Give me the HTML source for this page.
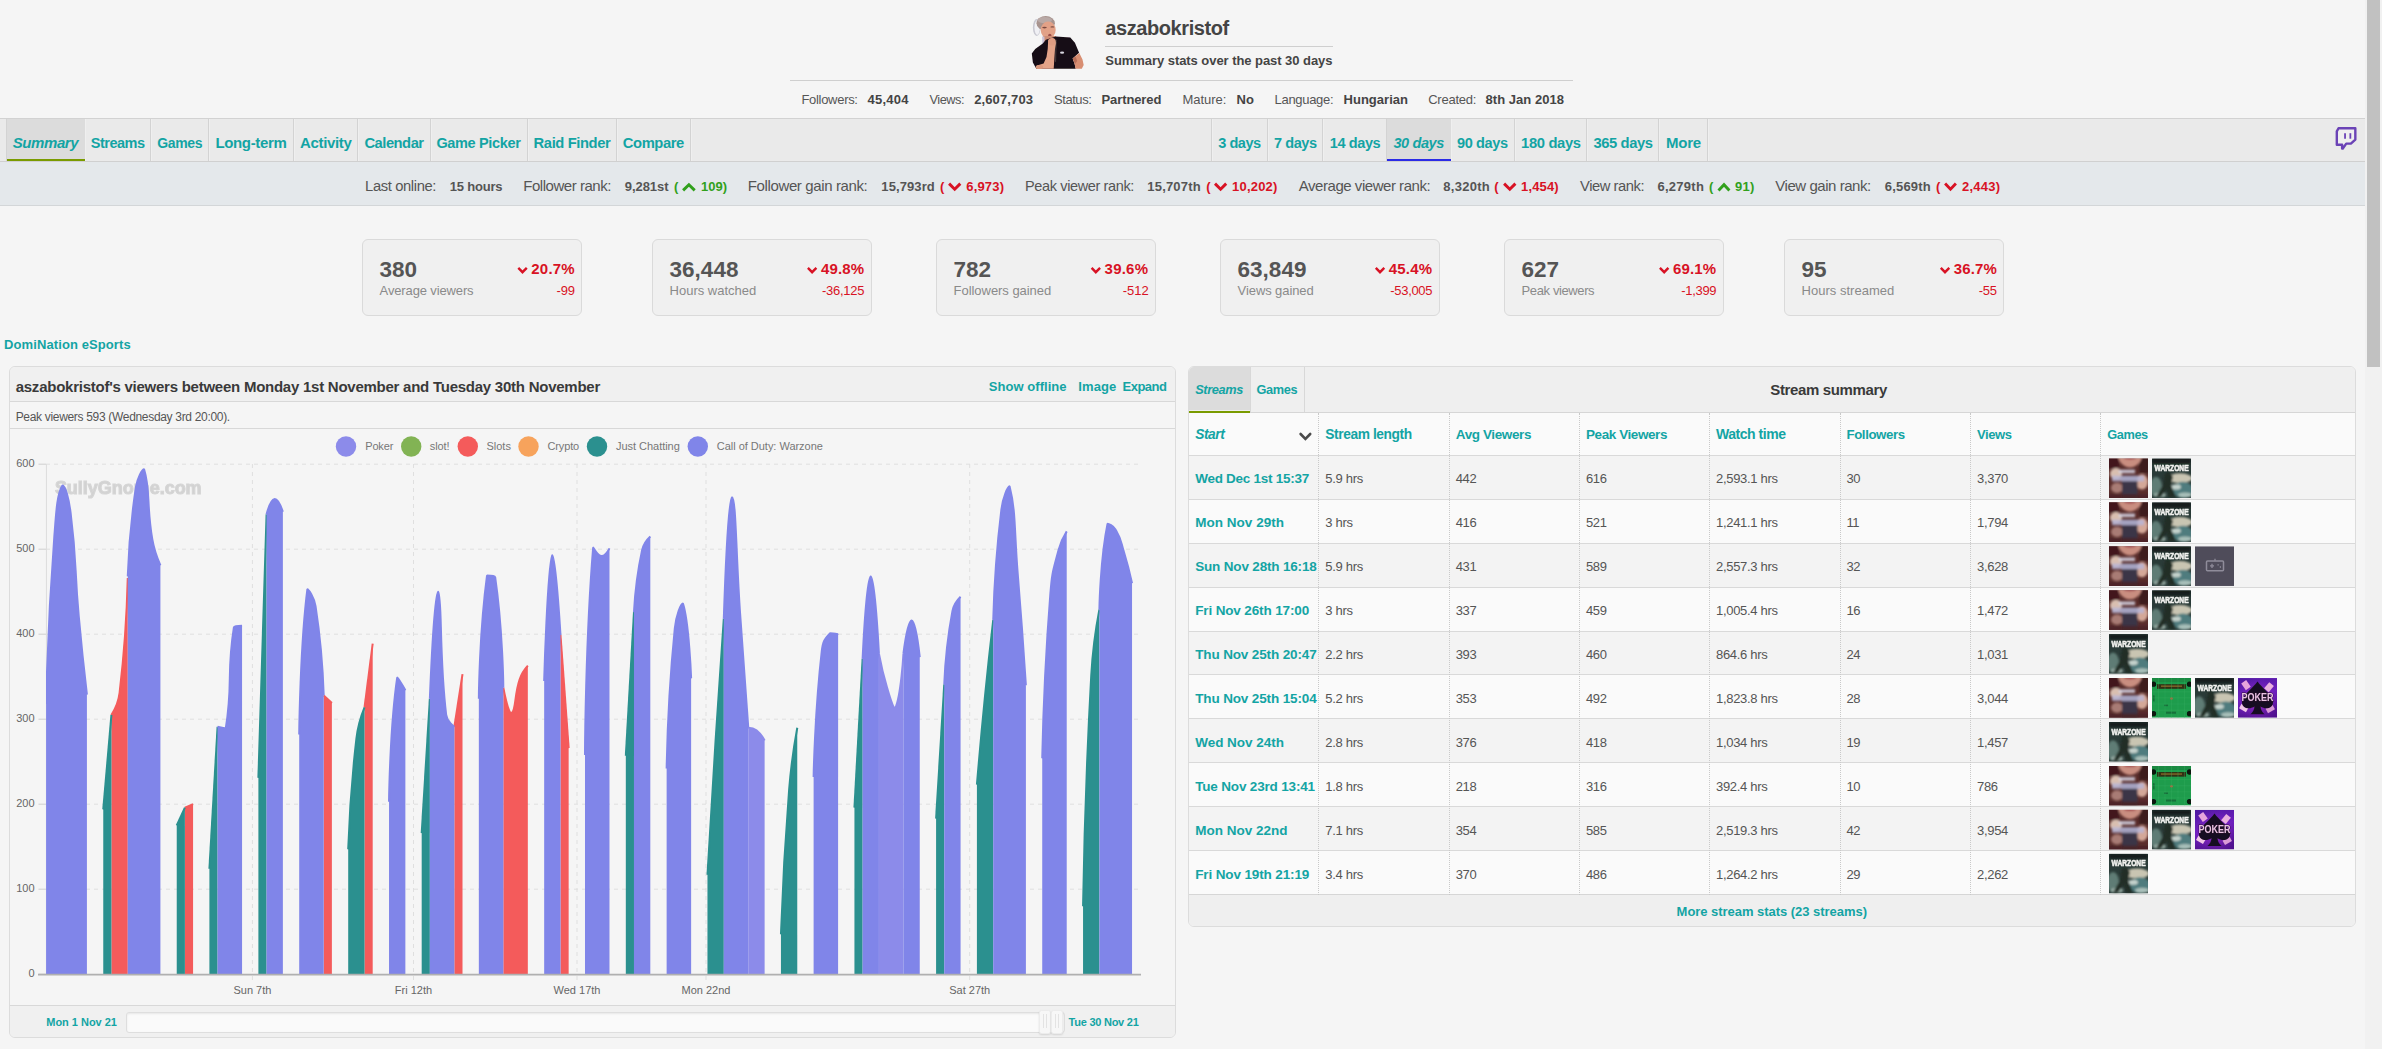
<!DOCTYPE html>
<html lang="en"><head><meta charset="utf-8"><title>aszabokristof - Twitch stats summary</title><style>html,body{margin:0;padding:0}body{width:2382px;height:1049px;overflow:hidden;background:#f5f5f5;position:relative;font-family:"Liberation Sans",sans-serif}
.t{position:absolute;white-space:pre;line-height:1;font-family:"Liberation Sans",sans-serif}</style></head><body>
<div style="position:absolute;left:2365px;top:0px;width:17px;height:1049px;background:#f1f1f1;"></div>
<div style="position:absolute;left:2367px;top:0px;width:13px;height:366.5px;background:#c1c1c1;"></div>
<div style="position:absolute;left:1105px;top:45.6px;width:228px;height:1px;background:#cfcfcf;"></div>
<div style="position:absolute;left:790px;top:79.9px;width:783px;height:1px;background:#cfcfcf;"></div>
<div style="position:absolute;left:0px;top:118px;width:2365px;height:1px;background:#d2d2d2;"></div>
<div style="position:absolute;left:0px;top:119px;width:2365px;height:42px;background:#eaeaea;"></div>
<div style="position:absolute;left:0px;top:161px;width:2365px;height:1px;background:#d0d0d0;"></div>
<div style="position:absolute;left:6px;top:119px;width:1px;height:42px;background:#d3d3d3;"></div>
<div style="position:absolute;left:7px;top:119px;width:1px;height:42px;background:#efefef;"></div>
<div style="position:absolute;left:84px;top:119px;width:1px;height:42px;background:#d3d3d3;"></div>
<div style="position:absolute;left:85px;top:119px;width:1px;height:42px;background:#efefef;"></div>
<div style="position:absolute;left:150px;top:119px;width:1px;height:42px;background:#d3d3d3;"></div>
<div style="position:absolute;left:151px;top:119px;width:1px;height:42px;background:#efefef;"></div>
<div style="position:absolute;left:208px;top:119px;width:1px;height:42px;background:#d3d3d3;"></div>
<div style="position:absolute;left:209px;top:119px;width:1px;height:42px;background:#efefef;"></div>
<div style="position:absolute;left:293px;top:119px;width:1px;height:42px;background:#d3d3d3;"></div>
<div style="position:absolute;left:294px;top:119px;width:1px;height:42px;background:#efefef;"></div>
<div style="position:absolute;left:357px;top:119px;width:1px;height:42px;background:#d3d3d3;"></div>
<div style="position:absolute;left:358px;top:119px;width:1px;height:42px;background:#efefef;"></div>
<div style="position:absolute;left:430px;top:119px;width:1px;height:42px;background:#d3d3d3;"></div>
<div style="position:absolute;left:431px;top:119px;width:1px;height:42px;background:#efefef;"></div>
<div style="position:absolute;left:527px;top:119px;width:1px;height:42px;background:#d3d3d3;"></div>
<div style="position:absolute;left:528px;top:119px;width:1px;height:42px;background:#efefef;"></div>
<div style="position:absolute;left:616px;top:119px;width:1px;height:42px;background:#d3d3d3;"></div>
<div style="position:absolute;left:617px;top:119px;width:1px;height:42px;background:#efefef;"></div>
<div style="position:absolute;left:690px;top:119px;width:1px;height:42px;background:#d3d3d3;"></div>
<div style="position:absolute;left:691px;top:119px;width:1px;height:42px;background:#efefef;"></div>
<div style="position:absolute;left:1211px;top:119px;width:1px;height:42px;background:#d3d3d3;"></div>
<div style="position:absolute;left:1212px;top:119px;width:1px;height:42px;background:#efefef;"></div>
<div style="position:absolute;left:1267px;top:119px;width:1px;height:42px;background:#d3d3d3;"></div>
<div style="position:absolute;left:1268px;top:119px;width:1px;height:42px;background:#efefef;"></div>
<div style="position:absolute;left:1322px;top:119px;width:1px;height:42px;background:#d3d3d3;"></div>
<div style="position:absolute;left:1323px;top:119px;width:1px;height:42px;background:#efefef;"></div>
<div style="position:absolute;left:1386px;top:119px;width:1px;height:42px;background:#d3d3d3;"></div>
<div style="position:absolute;left:1387px;top:119px;width:1px;height:42px;background:#efefef;"></div>
<div style="position:absolute;left:1450px;top:119px;width:1px;height:42px;background:#d3d3d3;"></div>
<div style="position:absolute;left:1451px;top:119px;width:1px;height:42px;background:#efefef;"></div>
<div style="position:absolute;left:1514px;top:119px;width:1px;height:42px;background:#d3d3d3;"></div>
<div style="position:absolute;left:1515px;top:119px;width:1px;height:42px;background:#efefef;"></div>
<div style="position:absolute;left:1586px;top:119px;width:1px;height:42px;background:#d3d3d3;"></div>
<div style="position:absolute;left:1587px;top:119px;width:1px;height:42px;background:#efefef;"></div>
<div style="position:absolute;left:1658px;top:119px;width:1px;height:42px;background:#d3d3d3;"></div>
<div style="position:absolute;left:1659px;top:119px;width:1px;height:42px;background:#efefef;"></div>
<div style="position:absolute;left:1707px;top:119px;width:1px;height:42px;background:#d3d3d3;"></div>
<div style="position:absolute;left:1708px;top:119px;width:1px;height:42px;background:#efefef;"></div>
<div style="position:absolute;left:6.6px;top:119px;width:78px;height:40px;background:#dcdcdc;"></div>
<div style="position:absolute;left:6.6px;top:158.6px;width:78px;height:2.6px;background:#7a9b00;"></div>
<div style="position:absolute;left:1387px;top:119px;width:63.6px;height:40px;background:#dcdcdc;"></div>
<div style="position:absolute;left:1387px;top:158.6px;width:63.6px;height:2.6px;background:#2b2be6;"></div>
<div style="position:absolute;left:0px;top:162px;width:2365px;height:43px;background:#e4e8eb;"></div>
<div style="position:absolute;left:0px;top:205px;width:2365px;height:1px;background:#d3d6d8;"></div>
<div style="position:absolute;left:362px;top:239px;width:218px;height:75px;background:#f0f0f0;border:1px solid #dadada;border-radius:6px;"></div>
<div style="position:absolute;left:652px;top:239px;width:218px;height:75px;background:#f0f0f0;border:1px solid #dadada;border-radius:6px;"></div>
<div style="position:absolute;left:936px;top:239px;width:218px;height:75px;background:#f0f0f0;border:1px solid #dadada;border-radius:6px;"></div>
<div style="position:absolute;left:1220px;top:239px;width:218px;height:75px;background:#f0f0f0;border:1px solid #dadada;border-radius:6px;"></div>
<div style="position:absolute;left:1504px;top:239px;width:218px;height:75px;background:#f0f0f0;border:1px solid #dadada;border-radius:6px;"></div>
<div style="position:absolute;left:1784px;top:239px;width:218px;height:75px;background:#f0f0f0;border:1px solid #dadada;border-radius:6px;"></div>
<div style="position:absolute;left:9px;top:366px;width:1165px;height:670px;border:1px solid #dcdcdc;border-radius:6px;overflow:hidden;background:#f5f5f5"><div style="position:absolute;left:0;top:0;width:100%;height:34.4px;background:#f0f0f0;border-bottom:1px solid #d8d8d8"></div><div style="position:absolute;left:0;top:61.1px;width:100%;height:1px;background:#d8d8d8"></div><div style="position:absolute;left:0;top:637.8px;width:100%;height:1px;background:#d8d8d8"></div><div style="position:absolute;left:0;top:638.8px;width:100%;height:32px;background:#f0f0f0"></div></div>
<div style="position:absolute;left:126px;top:1012px;width:937px;height:18.6px;background:#fafafa;border:1px solid #dedede;border-radius:3px;box-shadow:inset 0 1px 2px rgba(0,0,0,.08);"></div>
<div style="position:absolute;left:1039.3px;top:1010.2px;width:10px;height:21.6px;background:#f7f7f7;border:1px solid #ececec;border-radius:2.5px;box-shadow:0 1px 2px rgba(0,0,0,.12)"><i style="position:absolute;left:3px;top:3px;width:1px;height:14px;background:#e3e3e3"></i><i style="position:absolute;left:6px;top:3px;width:1px;height:14px;background:#e3e3e3"></i></div>
<div style="position:absolute;left:1051.3px;top:1010.2px;width:10px;height:21.6px;background:#f7f7f7;border:1px solid #ececec;border-radius:2.5px;box-shadow:0 1px 2px rgba(0,0,0,.12)"><i style="position:absolute;left:3px;top:3px;width:1px;height:14px;background:#e3e3e3"></i><i style="position:absolute;left:6px;top:3px;width:1px;height:14px;background:#e3e3e3"></i></div>
<div style="position:absolute;left:1188px;top:366px;width:1165.7px;height:558.5px;border:1px solid #dcdcdc;border-radius:6px;overflow:hidden;background:#fafafa"><div style="position:absolute;left:0;top:0;width:100%;height:44.6px;background:#efefef;border-bottom:1px solid #d6d6d6"></div><div style="position:absolute;left:0;top:0;width:61px;height:43px;background:#dcdcdc"></div><div style="position:absolute;left:0;top:43.8px;width:61px;height:1.9px;background:#7a9b00"></div><div style="position:absolute;left:61px;top:0;width:1px;height:44.6px;background:#d8d8d8"></div><div style="position:absolute;left:114.5px;top:0;width:1px;height:44.6px;background:#d8d8d8"></div><div style="position:absolute;left:0;top:87.80px;width:100%;height:43.93px;background:#f3f3f3;border-top:1px solid #d9d9d9"></div><div style="position:absolute;left:0;top:131.73px;width:100%;height:43.93px;background:#fafafa;border-top:1px solid #d9d9d9"></div><div style="position:absolute;left:0;top:175.66px;width:100%;height:43.93px;background:#f3f3f3;border-top:1px solid #d9d9d9"></div><div style="position:absolute;left:0;top:219.59px;width:100%;height:43.93px;background:#fafafa;border-top:1px solid #d9d9d9"></div><div style="position:absolute;left:0;top:263.52px;width:100%;height:43.93px;background:#f3f3f3;border-top:1px solid #d9d9d9"></div><div style="position:absolute;left:0;top:307.45px;width:100%;height:43.93px;background:#fafafa;border-top:1px solid #d9d9d9"></div><div style="position:absolute;left:0;top:351.38px;width:100%;height:43.93px;background:#f3f3f3;border-top:1px solid #d9d9d9"></div><div style="position:absolute;left:0;top:395.31px;width:100%;height:43.93px;background:#fafafa;border-top:1px solid #d9d9d9"></div><div style="position:absolute;left:0;top:439.24px;width:100%;height:43.93px;background:#f3f3f3;border-top:1px solid #d9d9d9"></div><div style="position:absolute;left:0;top:483.17px;width:100%;height:43.93px;background:#fafafa;border-top:1px solid #d9d9d9"></div><div style="position:absolute;left:0;top:527.10px;width:100%;height:40px;background:#efefef;border-top:1px solid #d6d6d6"></div><div style="position:absolute;left:129.3px;top:45.6px;width:0;height:482.0px;border-left:1px dotted #c9c9c9"></div><div style="position:absolute;left:259.6px;top:45.6px;width:0;height:482.0px;border-left:1px dotted #c9c9c9"></div><div style="position:absolute;left:389.9px;top:45.6px;width:0;height:482.0px;border-left:1px dotted #c9c9c9"></div><div style="position:absolute;left:520.2px;top:45.6px;width:0;height:482.0px;border-left:1px dotted #c9c9c9"></div><div style="position:absolute;left:650.5px;top:45.6px;width:0;height:482.0px;border-left:1px dotted #c9c9c9"></div><div style="position:absolute;left:780.8px;top:45.6px;width:0;height:482.0px;border-left:1px dotted #c9c9c9"></div><div style="position:absolute;left:911.1px;top:45.6px;width:0;height:482.0px;border-left:1px dotted #c9c9c9"></div></div>
<svg style="position:absolute;left:0;top:0" width="2382" height="1049" viewBox="0 0 2382 1049">
<defs>
<filter id="b06" x="-5%" y="-5%" width="110%" height="110%"><feGaussianBlur stdDeviation="0.45"/></filter>
<filter id="b1" x="-5%" y="-5%" width="110%" height="110%"><feGaussianBlur stdDeviation="0.9"/></filter>
<filter id="wm" x="-5%" y="-30%" width="110%" height="160%"><feGaussianBlur stdDeviation="0.7"/></filter>
<clipPath id="tc"><rect x="0" y="0" width="39" height="39"/></clipPath>
<linearGradient id="pg" x1="0" y1="0" x2="0.3" y2="1"><stop offset="0" stop-color="#4d18a0"/><stop offset="0.55" stop-color="#6c1fbc"/><stop offset="1" stop-color="#50128e"/></linearGradient>
<radialGradient id="pg2" cx="0.5" cy="0.55" r="0.6"><stop offset="0" stop-color="#c23bd6" stop-opacity="0.75"/><stop offset="1" stop-color="#7a22c8" stop-opacity="0"/></radialGradient>
<g id="thJ" clip-path="url(#tc)"><rect width="39" height="39" fill="#5a2e2c"/>
 <g filter="url(#b1)">
 <rect x="-2" y="-2" width="12" height="12" fill="#43191f"/><rect x="30" y="-2" width="11" height="16" fill="#3c1a1e"/>
 <path d="M9 -2 L33 -2 C32 5 26 9 21 9 C16 9 10 5 9 -2 Z" fill="#c98e80"/>
 <ellipse cx="21" cy="-0.500" rx="6" ry="1.600" fill="#a04048"/>
 <ellipse cx="7" cy="15" rx="6" ry="5.500" fill="#d9bfb0"/>
 <ellipse cx="33" cy="23" rx="6" ry="7.500" fill="#d4a898"/>
 <ellipse cx="8" cy="29" rx="6" ry="5" fill="#a87c74"/>
 <rect x="13" y="17" width="15.500" height="24" fill="#3a3446"/>
 <rect x="-2" y="35" width="43" height="6" fill="#4a2226" opacity="0.8"/>
 <rect x="10" y="11" width="16" height="3.600" fill="#d5d3e4" opacity="0.85"/>
 <rect x="3" y="17" width="32" height="5.500" fill="#b7b6d6" opacity="0.85"/>
 </g></g>
<g id="thW" clip-path="url(#tc)"><rect width="39" height="39" fill="#2a3b38"/>
 <g filter="url(#b1)">
 <rect x="0" y="0" width="39" height="5" fill="#141f1d"/>
 <ellipse cx="28" cy="19.500" rx="12" ry="5" fill="#c9c5b2"/>
 <ellipse cx="31" cy="31" rx="10" ry="8" fill="#4f7c7e"/>
 <ellipse cx="4" cy="28" rx="6" ry="10" fill="#5f7c74"/>
 <ellipse cx="24" cy="28" rx="5" ry="2.500" fill="#c4d2cc"/>
 <ellipse cx="33" cy="36" rx="7" ry="2.500" fill="#a9c0ba"/>
 <ellipse cx="8" cy="36" rx="6" ry="2.500" fill="#9db2aa"/>
 <path d="M13 14 L17 13 L21 18 L19 26 L24 38 L17 38 L15 30 L9 38 L4 38 L11 26 Z" fill="#222e26"/>
 </g>
 <text x="19.600" y="12.500" text-anchor="middle" font-family="Liberation Sans, sans-serif" font-weight="700" font-size="8.600" fill="#f1f1ee" stroke="#f1f1ee" stroke-width="0.6" textLength="34" lengthAdjust="spacingAndGlyphs" filter="url(#b06)">WARZONE</text>
</g>
<g id="thS" clip-path="url(#tc)"><rect width="39" height="39" fill="#1e9c4c"/>
 <g filter="url(#b06)">
 <rect x="0" y="0" width="39" height="4" fill="#1a8a42"/>
 <circle cx="1.5" cy="6" r="2.6" fill="#07140a"/><circle cx="37.5" cy="6" r="2.6" fill="#07140a"/><circle cx="1.5" cy="35" r="2.6" fill="#07140a"/><circle cx="37.5" cy="35" r="2.6" fill="#07140a"/>
 <rect x="5" y="6" width="29" height="4.6" fill="#33260c" opacity="0.9"/>
 <rect x="9" y="7.2" width="21" height="1.6" fill="#8a6a2a" opacity="0.8"/>
 <circle cx="19.5" cy="20" r="1.2" fill="#c95a3a"/>
 <rect x="14" y="33" width="10" height="2" fill="#16703a"/>
 <rect x="12" y="26" width="4" height="1.6" fill="#16703a"/><rect x="1" y="17" width="1.6" height="6" fill="#157038"/>
 <path d="M0 13.500H39M0 19.500H39M0 25.500H39M0 31.500H39M6.500 0V39M13 0V39M19.500 0V39M26 0V39M32.500 0V39" stroke="#35ad60" stroke-width="0.5" opacity="0.7"/>
 </g></g>
<g id="thP" clip-path="url(#tc)"><rect width="39" height="39" fill="url(#pg)"/><rect width="39" height="39" fill="url(#pg2)"/>
 <g filter="url(#b06)">
 <rect x="5" y="3" width="6" height="8" fill="#e6a4dc" transform="rotate(-35 8 7)"/>
 <rect x="28" y="5" width="6" height="8" fill="#e9b0de" transform="rotate(40 31 9)"/>
 <rect x="2" y="27" width="8" height="5" fill="#f0c6e6" transform="rotate(30 6 29)"/>
 <rect x="28" y="28" width="8" height="5" fill="#d99ad6" transform="rotate(-30 32 30)"/>
 <path d="M19.500 3.500 C23 9 35 17 35 24 C35 29.500 28 31.500 22.500 28 C22.800 31 24 33.500 26.500 35.500 L12.500 35.500 C15 33.500 16.200 31 16.500 28 C11 31.500 4 29.500 4 24 C4 17 16 9 19.500 3.500 Z" fill="#180a20"/>
 <text x="19.500" y="22.400" text-anchor="middle" font-family="Liberation Sans, sans-serif" font-weight="700" font-size="10.500" fill="#e9c4e2" stroke="#2a1030" stroke-width="0.9" paint-order="stroke" textLength="32" lengthAdjust="spacingAndGlyphs">POKER</text>
 </g></g>
<g id="thG" clip-path="url(#tc)"><rect width="39" height="39" fill="#4f4c5a"/>
 <g filter="url(#b06)" fill="none" stroke="#8f8c9a" stroke-width="1.5">
 <rect x="11.500" y="14.500" width="17" height="9.500" rx="1"/>
 <path d="M15 19.300H19M17 17.300V21.300" stroke-width="1.300"/><path d="M22.500 18.300h1.200M24.800 20.300h1.200" stroke-width="1.400"/>
 <path d="M20 12.200V14.500" stroke-width="1.300"/>
 </g></g>
</defs>
<line x1="46" x2="1140" y1="464.2" y2="464.2" stroke="#dfdfdf" stroke-width="1" stroke-dasharray="4 4"/>
<line x1="46" x2="1140" y1="549.2" y2="549.2" stroke="#dfdfdf" stroke-width="1" stroke-dasharray="4 4"/>
<line x1="46" x2="1140" y1="634.2" y2="634.2" stroke="#dfdfdf" stroke-width="1" stroke-dasharray="4 4"/>
<line x1="46" x2="1140" y1="719.2" y2="719.2" stroke="#dfdfdf" stroke-width="1" stroke-dasharray="4 4"/>
<line x1="46" x2="1140" y1="804.2" y2="804.2" stroke="#dfdfdf" stroke-width="1" stroke-dasharray="4 4"/>
<line x1="46" x2="1140" y1="889.2" y2="889.2" stroke="#dfdfdf" stroke-width="1" stroke-dasharray="4 4"/>
<line x1="252.4" x2="252.4" y1="464" y2="984" stroke="#dfdfdf" stroke-width="1" stroke-dasharray="4 4"/>
<line x1="413.5" x2="413.5" y1="464" y2="984" stroke="#dfdfdf" stroke-width="1" stroke-dasharray="4 4"/>
<line x1="577.0" x2="577.0" y1="464" y2="984" stroke="#dfdfdf" stroke-width="1" stroke-dasharray="4 4"/>
<line x1="706.0" x2="706.0" y1="464" y2="984" stroke="#dfdfdf" stroke-width="1" stroke-dasharray="4 4"/>
<line x1="969.7" x2="969.7" y1="464" y2="984" stroke="#dfdfdf" stroke-width="1" stroke-dasharray="4 4"/>
<line x1="38.5" x2="46" y1="464.2" y2="464.2" stroke="#cfcfcf" stroke-width="1"/>
<line x1="38.5" x2="46" y1="549.2" y2="549.2" stroke="#cfcfcf" stroke-width="1"/>
<line x1="38.5" x2="46" y1="634.2" y2="634.2" stroke="#cfcfcf" stroke-width="1"/>
<line x1="38.5" x2="46" y1="719.2" y2="719.2" stroke="#cfcfcf" stroke-width="1"/>
<line x1="38.5" x2="46" y1="804.2" y2="804.2" stroke="#cfcfcf" stroke-width="1"/>
<line x1="38.5" x2="46" y1="889.2" y2="889.2" stroke="#cfcfcf" stroke-width="1"/>
<line x1="38.5" x2="46" y1="974.2" y2="974.2" stroke="#cfcfcf" stroke-width="1"/>
<line x1="46.4" x2="46.4" y1="464" y2="974" stroke="#dcdcdc" stroke-width="1"/>
<text x="54.9" y="494" font-family="Liberation Sans, sans-serif" font-weight="700" font-size="17.5" fill="#d2d2d2" stroke="#d6d6d6" stroke-width="1.1" textLength="146.7" lengthAdjust="spacingAndGlyphs" style="filter:url(#wm)">SullyGnome.com</text>
<clipPath id="cc"><rect x="46" y="455" width="1096" height="520"/></clipPath><g clip-path="url(#cc)"><path d="M748.29 727.70 C748.29 727.70 753.22 727.73 756.45 730.25 C761.39 734.10 764.62 740.45 764.62 740.45 L764.62 974.20 L748.29 974.20 Z" fill="#8c8bea"/>
<path d="M748.29 727.70 C748.29 727.70 753.22 727.73 756.45 730.25 C761.39 734.10 764.62 740.45 764.62 740.45" fill="none" stroke="#8c8bea" stroke-width="2" stroke-linejoin="bevel"/>
<path d="M878.93 653.75 C878.93 653.75 882.08 671.05 887.09 687.75 C890.25 698.25 892.93 708.15 895.26 708.15 C901.09 696.00 903.42 653.75 903.42 653.75 L903.42 974.20 L878.93 974.20 Z" fill="#8c8bea"/>
<path d="M878.93 653.75 C878.93 653.75 882.08 671.05 887.09 687.75 C890.25 698.25 892.93 708.15 895.26 708.15 C901.09 696.00 903.42 653.75 903.42 653.75" fill="none" stroke="#8c8bea" stroke-width="2" stroke-linejoin="bevel"/>
<path d="M111.42 714.95 C111.42 714.95 118.20 704.48 119.58 692.85 C126.36 636.06 127.75 578.10 127.75 578.10 L127.75 974.20 L111.42 974.20 Z" fill="#f45b5b"/>
<path d="M111.42 714.95 C111.42 714.95 118.20 704.48 119.58 692.85 C126.36 636.06 127.75 578.10 127.75 578.10" fill="none" stroke="#f45b5b" stroke-width="2" stroke-linejoin="bevel"/>
<path d="M184.90 807.60 C184.90 807.60 193.07 804.20 193.07 804.20 L193.07 974.20 L184.90 974.20 Z" fill="#f45b5b"/>
<path d="M184.90 807.60 C184.90 807.60 193.07 804.20 193.07 804.20" fill="none" stroke="#f45b5b" stroke-width="2" stroke-linejoin="bevel"/>
<path d="M323.71 695.40 C323.71 695.40 331.88 703.05 331.88 703.05 L331.88 974.20 L323.71 974.20 Z" fill="#f45b5b"/>
<path d="M323.71 695.40 C323.71 695.40 331.88 703.05 331.88 703.05" fill="none" stroke="#f45b5b" stroke-width="2" stroke-linejoin="bevel"/>
<path d="M364.53 707.30 C364.53 707.30 372.70 643.55 372.70 643.55 L372.70 974.20 L364.53 974.20 Z" fill="#f45b5b"/>
<path d="M364.53 707.30 C364.53 707.30 372.70 643.55 372.70 643.55" fill="none" stroke="#f45b5b" stroke-width="2" stroke-linejoin="bevel"/>
<path d="M454.35 726.85 C454.35 726.85 462.51 674.15 462.51 674.15 L462.51 974.20 L454.35 974.20 Z" fill="#f45b5b"/>
<path d="M454.35 726.85 C454.35 726.85 462.51 674.15 462.51 674.15" fill="none" stroke="#f45b5b" stroke-width="2" stroke-linejoin="bevel"/>
<path d="M503.34 687.75 C503.34 687.75 507.96 713.25 511.50 713.25 C516.13 710.84 514.05 695.62 519.67 679.25 C522.22 671.82 527.83 665.65 527.83 665.65 L527.83 974.20 L503.34 974.20 Z" fill="#f45b5b"/>
<path d="M503.34 687.75 C503.34 687.75 507.96 713.25 511.50 713.25 C516.13 710.84 514.05 695.62 519.67 679.25 C522.22 671.82 527.83 665.65 527.83 665.65" fill="none" stroke="#f45b5b" stroke-width="2" stroke-linejoin="bevel"/>
<path d="M560.50 635.05 C560.50 635.05 568.66 748.10 568.66 748.10 L568.66 974.20 L560.50 974.20 Z" fill="#f45b5b"/>
<path d="M560.50 635.05 C560.50 635.05 568.66 748.10 568.66 748.10" fill="none" stroke="#f45b5b" stroke-width="2" stroke-linejoin="bevel"/>
<path d="M103.25 809.30 C103.25 809.30 111.42 714.95 111.42 714.95 L111.42 974.20 L103.25 974.20 Z" fill="#2b908f"/>
<path d="M103.25 809.30 C103.25 809.30 111.42 714.95 111.42 714.95" fill="none" stroke="#2b908f" stroke-width="2" stroke-linejoin="bevel"/>
<path d="M176.74 825.45 C176.74 825.45 184.90 807.60 184.90 807.60 L184.90 974.20 L176.74 974.20 Z" fill="#2b908f"/>
<path d="M176.74 825.45 C176.74 825.45 184.90 807.60 184.90 807.60" fill="none" stroke="#2b908f" stroke-width="2" stroke-linejoin="bevel"/>
<path d="M209.40 868.80 C209.40 868.80 217.56 726.85 217.56 726.85 L217.56 974.20 L209.40 974.20 Z" fill="#2b908f"/>
<path d="M209.40 868.80 C209.40 868.80 217.56 726.85 217.56 726.85" fill="none" stroke="#2b908f" stroke-width="2" stroke-linejoin="bevel"/>
<path d="M258.39 777.85 C258.39 777.85 266.56 514.35 266.56 514.35 L266.56 974.20 L258.39 974.20 Z" fill="#2b908f"/>
<path d="M258.39 777.85 C258.39 777.85 266.56 514.35 266.56 514.35" fill="none" stroke="#2b908f" stroke-width="2" stroke-linejoin="bevel"/>
<path d="M348.20 849.25 C348.20 849.25 350.06 793.63 356.37 738.75 C358.22 722.66 364.53 707.30 364.53 707.30 L364.53 974.20 L348.20 974.20 Z" fill="#2b908f"/>
<path d="M348.20 849.25 C348.20 849.25 350.06 793.63 356.37 738.75 C358.22 722.66 364.53 707.30 364.53 707.30" fill="none" stroke="#2b908f" stroke-width="2" stroke-linejoin="bevel"/>
<path d="M421.69 833.10 C421.69 833.10 429.85 698.80 429.85 698.80 L429.85 974.20 L421.69 974.20 Z" fill="#2b908f"/>
<path d="M421.69 833.10 C421.69 833.10 429.85 698.80 429.85 698.80" fill="none" stroke="#2b908f" stroke-width="2" stroke-linejoin="bevel"/>
<path d="M625.81 755.75 C625.81 755.75 633.98 612.10 633.98 612.10 L633.98 974.20 L625.81 974.20 Z" fill="#2b908f"/>
<path d="M625.81 755.75 C625.81 755.75 633.98 612.10 633.98 612.10" fill="none" stroke="#2b908f" stroke-width="2" stroke-linejoin="bevel"/>
<path d="M707.46 874.75 C707.46 874.75 711.32 807.16 715.63 739.60 C719.48 679.24 723.79 618.90 723.79 618.90 L723.79 974.20 L707.46 974.20 Z" fill="#2b908f"/>
<path d="M707.46 874.75 C707.46 874.75 711.32 807.16 715.63 739.60 C719.48 679.24 723.79 618.90 723.79 618.90" fill="none" stroke="#2b908f" stroke-width="2" stroke-linejoin="bevel"/>
<path d="M780.95 934.25 C780.95 934.25 783.41 861.85 789.11 789.75 C791.58 758.57 797.28 727.70 797.28 727.70 L797.28 974.20 L780.95 974.20 Z" fill="#2b908f"/>
<path d="M780.95 934.25 C780.95 934.25 783.41 861.85 789.11 789.75 C791.58 758.57 797.28 727.70 797.28 727.70" fill="none" stroke="#2b908f" stroke-width="2" stroke-linejoin="bevel"/>
<path d="M854.43 807.60 C854.43 807.60 862.60 658.85 862.60 658.85 L862.60 974.20 L854.43 974.20 Z" fill="#2b908f"/>
<path d="M854.43 807.60 C854.43 807.60 862.60 658.85 862.60 658.85" fill="none" stroke="#2b908f" stroke-width="2" stroke-linejoin="bevel"/>
<path d="M936.08 818.65 C936.08 818.65 944.25 684.35 944.25 684.35 L944.25 974.20 L936.08 974.20 Z" fill="#2b908f"/>
<path d="M936.08 818.65 C936.08 818.65 944.25 684.35 944.25 684.35" fill="none" stroke="#2b908f" stroke-width="2" stroke-linejoin="bevel"/>
<path d="M976.91 784.65 C976.91 784.65 980.66 739.99 985.07 695.40 C988.82 657.54 993.24 619.75 993.24 619.75 L993.24 974.20 L976.91 974.20 Z" fill="#2b908f"/>
<path d="M976.91 784.65 C976.91 784.65 980.66 739.99 985.07 695.40 C988.82 657.54 993.24 619.75 993.24 619.75" fill="none" stroke="#2b908f" stroke-width="2" stroke-linejoin="bevel"/>
<path d="M1083.05 906.20 C1083.05 906.20 1084.89 790.85 1091.22 675.85 C1093.05 642.52 1099.38 609.55 1099.38 609.55 L1099.38 974.20 L1083.05 974.20 Z" fill="#2b908f"/>
<path d="M1083.05 906.20 C1083.05 906.20 1084.89 790.85 1091.22 675.85 C1093.05 642.52 1099.38 609.55 1099.38 609.55" fill="none" stroke="#2b908f" stroke-width="2" stroke-linejoin="bevel"/>
<path d="M46.10 703.90 C46.10 703.90 48.05 620.38 54.27 537.30 C56.22 511.16 57.13 493.45 62.43 485.45 C65.30 485.45 68.84 498.61 70.59 512.65 C77.01 564.06 74.11 564.55 78.76 616.35 C82.27 655.50 86.92 694.55 86.92 694.55 L86.92 974.20 L46.10 974.20 Z" fill="#8085e9"/>
<path d="M46.10 703.90 C46.10 703.90 48.05 620.38 54.27 537.30 C56.22 511.16 57.13 493.45 62.43 485.45 C65.30 485.45 68.84 498.61 70.59 512.65 C77.01 564.06 74.11 564.55 78.76 616.35 C82.27 655.50 86.92 694.55 86.92 694.55" fill="none" stroke="#8085e9" stroke-width="2" stroke-linejoin="bevel"/>
<path d="M127.75 576.40 C127.75 576.40 129.22 531.08 135.91 487.15 C137.38 477.53 142.30 469.30 144.08 469.30 C150.46 489.56 146.38 504.53 152.24 539.00 C154.55 552.55 160.41 565.35 160.41 565.35 L160.41 974.20 L127.75 974.20 Z" fill="#8085e9"/>
<path d="M127.75 576.40 C127.75 576.40 129.22 531.08 135.91 487.15 C137.38 477.53 142.30 469.30 144.08 469.30 C150.46 489.56 146.38 504.53 152.24 539.00 C154.55 552.55 160.41 565.35 160.41 565.35" fill="none" stroke="#8085e9" stroke-width="2" stroke-linejoin="bevel"/>
<path d="M217.56 726.85 C217.56 726.85 225.11 728.55 225.73 728.55 C233.27 682.60 226.35 674.92 233.89 627.40 C234.52 625.70 242.06 625.70 242.06 625.70 L242.06 974.20 L217.56 974.20 Z" fill="#8085e9"/>
<path d="M217.56 726.85 C217.56 726.85 225.11 728.55 225.73 728.55 C233.27 682.60 226.35 674.92 233.89 627.40 C234.52 625.70 242.06 625.70 242.06 625.70" fill="none" stroke="#8085e9" stroke-width="2" stroke-linejoin="bevel"/>
<path d="M266.56 514.35 C266.56 514.35 270.36 499.73 274.72 499.05 C278.53 499.05 282.88 511.80 282.88 511.80 L282.88 974.20 L266.56 974.20 Z" fill="#8085e9"/>
<path d="M266.56 514.35 C266.56 514.35 270.36 499.73 274.72 499.05 C278.53 499.05 282.88 511.80 282.88 511.80" fill="none" stroke="#8085e9" stroke-width="2" stroke-linejoin="bevel"/>
<path d="M299.21 734.50 C299.21 734.50 300.15 645.96 307.38 589.15 C308.32 589.15 314.13 596.91 315.55 606.15 C322.29 650.04 323.71 695.40 323.71 695.40 L323.71 974.20 L299.21 974.20 Z" fill="#8085e9"/>
<path d="M299.21 734.50 C299.21 734.50 300.15 645.96 307.38 589.15 C308.32 589.15 314.13 596.91 315.55 606.15 C322.29 650.04 323.71 695.40 323.71 695.40" fill="none" stroke="#8085e9" stroke-width="2" stroke-linejoin="bevel"/>
<path d="M389.03 801.65 C389.03 801.65 389.92 727.18 397.19 677.55 C398.08 677.55 405.36 690.30 405.36 690.30 L405.36 974.20 L389.03 974.20 Z" fill="#8085e9"/>
<path d="M389.03 801.65 C389.03 801.65 389.92 727.18 397.19 677.55 C398.08 677.55 405.36 690.30 405.36 690.30" fill="none" stroke="#8085e9" stroke-width="2" stroke-linejoin="bevel"/>
<path d="M429.85 698.80 C429.85 698.80 434.22 591.70 438.02 591.70 C442.39 596.02 438.87 654.44 446.19 714.95 C447.04 722.02 454.35 726.85 454.35 726.85 L454.35 974.20 L429.85 974.20 Z" fill="#8085e9"/>
<path d="M429.85 698.80 C429.85 698.80 434.22 591.70 438.02 591.70 C442.39 596.02 438.87 654.44 446.19 714.95 C447.04 722.02 454.35 726.85 454.35 726.85" fill="none" stroke="#8085e9" stroke-width="2" stroke-linejoin="bevel"/>
<path d="M478.84 698.80 C478.84 698.80 479.36 632.48 487.01 575.55 C487.53 575.55 494.60 575.55 495.17 577.25 C502.77 629.42 503.34 687.75 503.34 687.75 L503.34 974.20 L478.84 974.20 Z" fill="#8085e9"/>
<path d="M478.84 698.80 C478.84 698.80 479.36 632.48 487.01 575.55 C487.53 575.55 494.60 575.55 495.17 577.25 C502.77 629.42 503.34 687.75 503.34 687.75" fill="none" stroke="#8085e9" stroke-width="2" stroke-linejoin="bevel"/>
<path d="M544.16 680.95 C544.16 680.95 547.34 569.17 552.33 555.15 C555.51 555.15 560.50 635.05 560.50 635.05 L560.50 974.20 L544.16 974.20 Z" fill="#8085e9"/>
<path d="M544.16 680.95 C544.16 680.95 547.34 569.17 552.33 555.15 C555.51 555.15 560.50 635.05 560.50 635.05" fill="none" stroke="#8085e9" stroke-width="2" stroke-linejoin="bevel"/>
<path d="M584.99 754.90 C584.99 754.90 585.43 641.61 593.15 547.50 C593.59 547.50 597.13 555.78 601.32 556.00 C605.30 556.21 609.49 548.35 609.49 548.35 L609.49 974.20 L584.99 974.20 Z" fill="#8085e9"/>
<path d="M584.99 754.90 C584.99 754.90 585.43 641.61 593.15 547.50 C593.59 547.50 597.13 555.78 601.32 556.00 C605.30 556.21 609.49 548.35 609.49 548.35" fill="none" stroke="#8085e9" stroke-width="2" stroke-linejoin="bevel"/>
<path d="M633.98 612.10 C633.98 612.10 635.63 580.23 642.14 550.05 C643.80 542.40 650.31 536.45 650.31 536.45 L650.31 974.20 L633.98 974.20 Z" fill="#8085e9"/>
<path d="M633.98 612.10 C633.98 612.10 635.63 580.23 642.14 550.05 C643.80 542.40 650.31 536.45 650.31 536.45" fill="none" stroke="#8085e9" stroke-width="2" stroke-linejoin="bevel"/>
<path d="M666.64 768.50 C666.64 768.50 667.91 697.84 674.80 628.25 C676.08 615.39 680.88 603.60 682.97 603.60 C689.04 622.24 691.13 678.40 691.13 678.40 L691.13 974.20 L666.64 974.20 Z" fill="#8085e9"/>
<path d="M666.64 768.50 C666.64 768.50 667.91 697.84 674.80 628.25 C676.08 615.39 680.88 603.60 682.97 603.60 C689.04 622.24 691.13 678.40 691.13 678.40" fill="none" stroke="#8085e9" stroke-width="2" stroke-linejoin="bevel"/>
<path d="M723.79 618.90 C723.79 618.90 727.79 498.65 731.96 497.35 C735.96 497.35 736.00 555.58 740.12 613.80 C744.16 670.75 748.29 727.70 748.29 727.70 L748.29 974.20 L723.79 974.20 Z" fill="#8085e9"/>
<path d="M723.79 618.90 C723.79 618.90 727.79 498.65 731.96 497.35 C735.96 497.35 736.00 555.58 740.12 613.80 C744.16 670.75 748.29 727.70 748.29 727.70" fill="none" stroke="#8085e9" stroke-width="2" stroke-linejoin="bevel"/>
<path d="M813.61 777.00 C813.61 777.00 814.71 713.35 821.77 651.20 C822.88 641.52 824.18 639.34 829.94 633.35 C832.35 633.35 838.10 634.20 838.10 634.20 L838.10 974.20 L813.61 974.20 Z" fill="#8085e9"/>
<path d="M813.61 777.00 C813.61 777.00 814.71 713.35 821.77 651.20 C822.88 641.52 824.18 639.34 829.94 633.35 C832.35 633.35 838.10 634.20 838.10 634.20" fill="none" stroke="#8085e9" stroke-width="2" stroke-linejoin="bevel"/>
<path d="M862.60 658.85 C862.60 658.85 866.55 577.72 870.76 576.40 C874.72 576.40 878.93 653.75 878.93 653.75 L878.93 974.20 L862.60 974.20 Z" fill="#8085e9"/>
<path d="M862.60 658.85 C862.60 658.85 866.55 577.72 870.76 576.40 C874.72 576.40 878.93 653.75 878.93 653.75" fill="none" stroke="#8085e9" stroke-width="2" stroke-linejoin="bevel"/>
<path d="M903.42 653.75 C903.42 653.75 907.70 620.60 911.59 620.60 C915.86 621.49 919.75 657.15 919.75 657.15 L919.75 974.20 L903.42 974.20 Z" fill="#8085e9"/>
<path d="M903.42 653.75 C903.42 653.75 907.70 620.60 911.59 620.60 C915.86 621.49 919.75 657.15 919.75 657.15" fill="none" stroke="#8085e9" stroke-width="2" stroke-linejoin="bevel"/>
<path d="M944.25 684.35 C944.25 684.35 945.75 646.97 952.41 611.25 C953.92 603.19 960.58 596.80 960.58 596.80 L960.58 974.20 L944.25 974.20 Z" fill="#8085e9"/>
<path d="M944.25 684.35 C944.25 684.35 945.75 646.97 952.41 611.25 C953.92 603.19 960.58 596.80 960.58 596.80" fill="none" stroke="#8085e9" stroke-width="2" stroke-linejoin="bevel"/>
<path d="M993.24 619.75 C993.24 619.75 994.71 563.95 1001.40 509.25 C1002.88 497.22 1007.80 486.30 1009.57 486.30 C1015.96 511.59 1014.14 530.03 1017.73 573.85 C1022.30 629.48 1025.90 685.20 1025.90 685.20 L1025.90 974.20 L993.24 974.20 Z" fill="#8085e9"/>
<path d="M993.24 619.75 C993.24 619.75 994.71 563.95 1001.40 509.25 C1002.88 497.22 1007.80 486.30 1009.57 486.30 C1015.96 511.59 1014.14 530.03 1017.73 573.85 C1022.30 629.48 1025.90 685.20 1025.90 685.20" fill="none" stroke="#8085e9" stroke-width="2" stroke-linejoin="bevel"/>
<path d="M1042.23 758.30 C1042.23 758.30 1043.95 675.57 1050.39 593.40 C1052.12 571.45 1052.98 571.26 1058.56 550.05 C1061.14 540.24 1066.72 531.35 1066.72 531.35 L1066.72 974.20 L1042.23 974.20 Z" fill="#8085e9"/>
<path d="M1042.23 758.30 C1042.23 758.30 1043.95 675.57 1050.39 593.40 C1052.12 571.45 1052.98 571.26 1058.56 550.05 C1061.14 540.24 1066.72 531.35 1066.72 531.35" fill="none" stroke="#8085e9" stroke-width="2" stroke-linejoin="bevel"/>
<path d="M1099.38 609.55 C1099.38 609.55 1100.24 559.46 1107.55 523.70 C1108.41 523.70 1113.26 525.44 1115.71 529.65 C1121.43 539.47 1120.45 540.50 1123.88 551.75 C1128.61 567.27 1132.04 583.20 1132.04 583.20 L1132.04 974.20 L1099.38 974.20 Z" fill="#8085e9"/>
<path d="M1099.38 609.55 C1099.38 609.55 1100.24 559.46 1107.55 523.70 C1108.41 523.70 1113.26 525.44 1115.71 529.65 C1121.43 539.47 1120.45 540.50 1123.88 551.75 C1128.61 567.27 1132.04 583.20 1132.04 583.20" fill="none" stroke="#8085e9" stroke-width="2" stroke-linejoin="bevel"/></g>
<line x1="38" x2="1141" y1="974.7" y2="974.7" stroke="#b0b0b0" stroke-width="1.7"/>
<circle cx="346.0" cy="446.5" r="10.2" fill="#8c8bea"/>
<circle cx="411.2" cy="446.5" r="10.2" fill="#82b354"/>
<circle cx="467.8" cy="446.5" r="10.2" fill="#f45b5b"/>
<circle cx="528.5" cy="446.5" r="10.2" fill="#f7a35c"/>
<circle cx="597.0" cy="446.5" r="10.2" fill="#2b908f"/>
<circle cx="697.8" cy="446.5" r="10.2" fill="#8085e9"/>
<polyline points="683.1,190.4 688.9,184.7 694.7,190.4" fill="none" stroke="#31a01c" stroke-width="2.9" stroke-linecap="butt" stroke-linejoin="miter"/>
<polyline points="949.1,183.6 954.7,189.2 960.3,183.6" fill="none" stroke="#d81224" stroke-width="2.9" stroke-linecap="butt" stroke-linejoin="miter"/>
<polyline points="1215.0,183.6 1220.6,189.2 1226.2,183.6" fill="none" stroke="#d81224" stroke-width="2.9" stroke-linecap="butt" stroke-linejoin="miter"/>
<polyline points="1504.1,183.6 1509.8,189.2 1515.4,183.6" fill="none" stroke="#d81224" stroke-width="2.9" stroke-linecap="butt" stroke-linejoin="miter"/>
<polyline points="1718.5,190.4 1724.0,184.7 1729.4,190.4" fill="none" stroke="#31a01c" stroke-width="2.9" stroke-linecap="butt" stroke-linejoin="miter"/>
<polyline points="1945.1,183.6 1950.5,189.2 1955.9,183.6" fill="none" stroke="#d81224" stroke-width="2.9" stroke-linecap="butt" stroke-linejoin="miter"/>
<polyline points="518.3,267.9 522.5,272.2 526.8,267.9" fill="none" stroke="#d81224" stroke-width="2.4" stroke-linecap="butt" stroke-linejoin="miter"/>
<polyline points="807.9,267.9 812.1,272.2 816.4,267.9" fill="none" stroke="#d81224" stroke-width="2.4" stroke-linecap="butt" stroke-linejoin="miter"/>
<polyline points="1091.6,267.9 1095.8,272.2 1100.1,267.9" fill="none" stroke="#d81224" stroke-width="2.4" stroke-linecap="butt" stroke-linejoin="miter"/>
<polyline points="1375.8,267.9 1380.0,272.2 1384.3,267.9" fill="none" stroke="#d81224" stroke-width="2.4" stroke-linecap="butt" stroke-linejoin="miter"/>
<polyline points="1659.9,267.9 1664.2,272.2 1668.4,267.9" fill="none" stroke="#d81224" stroke-width="2.4" stroke-linecap="butt" stroke-linejoin="miter"/>
<polyline points="1940.8,267.9 1945.0,272.2 1949.3,267.9" fill="none" stroke="#d81224" stroke-width="2.4" stroke-linecap="butt" stroke-linejoin="miter"/>
<polyline points="1300.6,434 1305.4,438.8 1310.2,434" fill="none" stroke="#4a4a4a" stroke-width="2.6" stroke-linecap="round"/>
<use href="#thJ" transform="translate(2109.00,458.40) scale(1,1.018)"/>
<use href="#thW" transform="translate(2152.00,458.40) scale(1,1.018)"/>
<use href="#thJ" transform="translate(2109.00,502.33) scale(1,1.018)"/>
<use href="#thW" transform="translate(2152.00,502.33) scale(1,1.018)"/>
<use href="#thJ" transform="translate(2109.00,546.26) scale(1,1.018)"/>
<use href="#thW" transform="translate(2152.00,546.26) scale(1,1.018)"/>
<use href="#thG" transform="translate(2195.00,546.26) scale(1,1.018)"/>
<use href="#thJ" transform="translate(2109.00,590.19) scale(1,1.018)"/>
<use href="#thW" transform="translate(2152.00,590.19) scale(1,1.018)"/>
<use href="#thW" transform="translate(2109.00,634.12) scale(1,1.018)"/>
<use href="#thJ" transform="translate(2109.00,678.05) scale(1,1.018)"/>
<use href="#thS" transform="translate(2152.00,678.05) scale(1,1.018)"/>
<use href="#thW" transform="translate(2195.00,678.05) scale(1,1.018)"/>
<use href="#thP" transform="translate(2238.00,678.05) scale(1,1.018)"/>
<use href="#thW" transform="translate(2109.00,721.98) scale(1,1.018)"/>
<use href="#thJ" transform="translate(2109.00,765.91) scale(1,1.018)"/>
<use href="#thS" transform="translate(2152.00,765.91) scale(1,1.018)"/>
<use href="#thJ" transform="translate(2109.00,809.84) scale(1,1.018)"/>
<use href="#thW" transform="translate(2152.00,809.84) scale(1,1.018)"/>
<use href="#thP" transform="translate(2195.00,809.84) scale(1,1.018)"/>
<use href="#thW" transform="translate(2109.00,853.77) scale(1,1.018)"/>
<g filter="url(#b06)"><ellipse cx="1036.7" cy="27.5" rx="3.8" ry="8.5" fill="#c9c9d2"/><ellipse cx="1037.2" cy="27.6" rx="2.7" ry="7.3" fill="#f0f0f4"/><ellipse cx="1045.7" cy="23.3" rx="9.2" ry="7.3" fill="#a8948f"/><ellipse cx="1044.7" cy="20.0" rx="7.3" ry="3.1" fill="#b9a9a6"/><ellipse cx="1048.2" cy="29.9" rx="7.5" ry="8.5" fill="#e2a187"/><ellipse cx="1044.5" cy="27.6" rx="2.3" ry="0.8" fill="#7a4a40"/><ellipse cx="1052.4" cy="26.9" rx="2.0" ry="0.7" fill="#7a4a40"/><ellipse cx="1049.8" cy="35.7" rx="1.7" ry="2.0" fill="#9c4f48"/><polygon points="1043.0,35.9 1055.8,35.9 1057.3,47.3 1043.0,47.3" fill="#cf8d74"/><polygon points="1042.1,36.6 1044.4,36.6 1044.7,43.5 1042.4,44.7" fill="#c9c2d6"/><polygon points="1031.8,53.4 1035.2,48.9 1042.8,43.5 1045.9,39.7 1055.8,36.5 1070.3,37.4 1074.9,42.7 1079.1,52.7 1072.6,58.4 1074.5,63.4 1075.8,68.7 1036.3,68.7 1032.9,62.6" fill="#170a14"/><polygon points="1072.7,58.6 1079.3,53.0 1082.5,59.5 1083.7,64.9 1081.8,68.7 1075.5,68.7 1074.6,63.4" fill="#d88e72"/><polygon points="1072.7,58.6 1075.6,56.5 1077.2,61.1 1075.0,64.1" fill="#b86e58"/><polygon points="1036.3,68.7 1036.9,65.5 1043.6,63.5 1046.5,56.9 1047.7,48.9 1048.2,39.7 1052.7,37.8 1056.2,42.7 1055.0,48.9 1054.4,58.0 1053.7,68.7" fill="#e3a388"/><ellipse cx="1052.1" cy="41.8" rx="3.8" ry="3.8" fill="#de9c82"/><ellipse cx="1039.4" cy="67.0" rx="3.7" ry="2.1" fill="#da977c"/><line x1="1056.1" y1="39.7" x2="1055.6" y2="61.8" stroke="#7d776c" stroke-width="0.5"/><ellipse cx="1062.1" cy="52.7" rx="2.1" ry="1.1" fill="#d8d8e0"/></g>
<polygon points="2338.52,128.23 2355.33,128.23 2355.33,139.55 2350.87,143.67 2346.24,143.67 2342.81,148.47 2342.12,148.47 2342.12,144.70 2336.81,144.70 2336.81,131.32" fill="#efefef" stroke="#6b43b6" stroke-width="2.4" stroke-linejoin="round"/><line x1="2345.04" y1="133.21" x2="2345.04" y2="138.70" stroke="#6b43b6" stroke-width="1.8"/><line x1="2350.36" y1="133.21" x2="2350.36" y2="138.70" stroke="#6b43b6" stroke-width="1.8"/>
</svg>
<span class="t" style="left:1105.30px;top:18.00px;font-size:20px;font-weight:700;color:#444;letter-spacing:-0.420px;">aszabokristof</span>
<span class="t" style="left:1105.30px;top:54.00px;font-size:13px;font-weight:700;color:#444;letter-spacing:-0.055px;">Summary stats over the past 30 days</span>
<span class="t" style="left:801.40px;top:93.00px;font-size:13px;font-weight:400;color:#555;letter-spacing:-0.294px;">Followers:</span>
<span class="t" style="left:867.60px;top:93.00px;font-size:13px;font-weight:700;color:#444;letter-spacing:0.207px;">45,404</span>
<span class="t" style="left:929.40px;top:94.00px;font-size:12.75px;font-weight:400;color:#555;letter-spacing:-0.426px;">Views:</span>
<span class="t" style="left:974.20px;top:93.00px;font-size:13px;font-weight:700;color:#444;letter-spacing:0.120px;">2,607,703</span>
<span class="t" style="left:1054.10px;top:93.00px;font-size:13px;font-weight:400;color:#555;letter-spacing:-0.461px;">Status:</span>
<span class="t" style="left:1101.50px;top:93.00px;font-size:13px;font-weight:700;color:#444;letter-spacing:-0.100px;">Partnered</span>
<span class="t" style="left:1182.40px;top:93.00px;font-size:13px;font-weight:400;color:#555;">Mature:</span>
<span class="t" style="left:1236.60px;top:93.00px;font-size:13px;font-weight:700;color:#444;letter-spacing:0.056px;">No</span>
<span class="t" style="left:1274.60px;top:93.00px;font-size:13px;font-weight:400;color:#555;letter-spacing:-0.319px;">Language:</span>
<span class="t" style="left:1343.50px;top:93.00px;font-size:13px;font-weight:700;color:#444;letter-spacing:0.025px;">Hungarian</span>
<span class="t" style="left:1428.20px;top:93.00px;font-size:13px;font-weight:400;color:#555;letter-spacing:-0.239px;">Created:</span>
<span class="t" style="left:1485.50px;top:93.00px;font-size:13px;font-weight:700;color:#444;letter-spacing:0.050px;">8th Jan 2018</span>
<span class="t" style="left:12.80px;top:135.00px;font-size:15px;font-weight:700;font-style:italic;color:#13a4a4;letter-spacing:-0.429px;">Summary</span>
<span class="t" style="left:90.70px;top:136.00px;font-size:14.5px;font-weight:700;color:#13a4a4;letter-spacing:-0.472px;">Streams</span>
<span class="t" style="left:157.20px;top:136.00px;font-size:14px;font-weight:700;color:#13a4a4;letter-spacing:-0.351px;">Games</span>
<span class="t" style="left:215.40px;top:135.00px;font-size:15px;font-weight:700;color:#13a4a4;letter-spacing:-0.346px;">Long-term</span>
<span class="t" style="left:300.00px;top:135.00px;font-size:15px;font-weight:700;color:#13a4a4;letter-spacing:-0.341px;">Activity</span>
<span class="t" style="left:364.40px;top:136.00px;font-size:14.75px;font-weight:700;color:#13a4a4;letter-spacing:-0.489px;">Calendar</span>
<span class="t" style="left:436.40px;top:136.00px;font-size:14.5px;font-weight:700;color:#13a4a4;letter-spacing:-0.348px;">Game Picker</span>
<span class="t" style="left:533.60px;top:136.00px;font-size:14.75px;font-weight:700;color:#13a4a4;letter-spacing:-0.404px;">Raid Finder</span>
<span class="t" style="left:622.80px;top:136.00px;font-size:14.75px;font-weight:700;color:#13a4a4;letter-spacing:-0.406px;">Compare</span>
<span class="t" style="left:1218.20px;top:136.00px;font-size:14.5px;font-weight:700;color:#13a4a4;letter-spacing:-0.431px;">3 days</span>
<span class="t" style="left:1274.00px;top:136.00px;font-size:14.5px;font-weight:700;color:#13a4a4;letter-spacing:-0.431px;">7 days</span>
<span class="t" style="left:1329.70px;top:136.00px;font-size:14.5px;font-weight:700;color:#13a4a4;letter-spacing:-0.370px;">14 days</span>
<span class="t" style="left:1393.40px;top:136.00px;font-size:14.5px;font-weight:700;font-style:italic;color:#13a4a4;letter-spacing:-0.370px;">30 days</span>
<span class="t" style="left:1457.10px;top:136.00px;font-size:14.5px;font-weight:700;color:#13a4a4;letter-spacing:-0.386px;">90 days</span>
<span class="t" style="left:1521.10px;top:136.00px;font-size:14.75px;font-weight:700;color:#13a4a4;letter-spacing:-0.347px;">180 days</span>
<span class="t" style="left:1593.50px;top:136.00px;font-size:14.75px;font-weight:700;color:#13a4a4;letter-spacing:-0.404px;">365 days</span>
<span class="t" style="left:1665.90px;top:135.00px;font-size:15px;font-weight:700;color:#13a4a4;letter-spacing:-0.181px;">More</span>
<span class="t" style="left:365.10px;top:179.00px;font-size:14.75px;font-weight:400;color:#555;letter-spacing:-0.378px;">Last online:</span>
<span class="t" style="left:449.70px;top:180.00px;font-size:13px;font-weight:700;color:#555;letter-spacing:-0.184px;">15 hours</span>
<span class="t" style="left:523.30px;top:178.00px;font-size:15px;font-weight:400;color:#555;letter-spacing:-0.469px;">Follower rank:</span>
<span class="t" style="left:624.70px;top:180.00px;font-size:13px;font-weight:700;color:#555;letter-spacing:-0.032px;">9,281st</span>
<span class="t" style="left:673.90px;top:180.00px;font-size:13px;font-weight:700;color:#31a01c;">(</span>
<span class="t" style="left:700.90px;top:180.00px;font-size:13px;font-weight:700;color:#31a01c;letter-spacing:0.023px;">109)</span>
<span class="t" style="left:747.80px;top:178.00px;font-size:15px;font-weight:400;color:#555;letter-spacing:-0.374px;">Follower gain rank:</span>
<span class="t" style="left:881.30px;top:180.00px;font-size:13px;font-weight:700;color:#555;letter-spacing:0.105px;">15,793rd</span>
<span class="t" style="left:939.90px;top:180.00px;font-size:13px;font-weight:700;color:#d81224;">(</span>
<span class="t" style="left:966.30px;top:180.00px;font-size:13px;font-weight:700;color:#d81224;letter-spacing:0.165px;">6,973)</span>
<span class="t" style="left:1025.00px;top:179.00px;font-size:14.5px;font-weight:400;color:#555;letter-spacing:-0.366px;">Peak viewer rank:</span>
<span class="t" style="left:1147.30px;top:180.00px;font-size:13px;font-weight:700;color:#555;letter-spacing:0.193px;">15,707th</span>
<span class="t" style="left:1206.20px;top:180.00px;font-size:13px;font-weight:700;color:#d81224;">(</span>
<span class="t" style="left:1232.00px;top:180.00px;font-size:13px;font-weight:700;color:#d81224;letter-spacing:0.218px;">10,202)</span>
<span class="t" style="left:1298.80px;top:178.00px;font-size:15px;font-weight:400;color:#555;letter-spacing:-0.464px;">Average viewer rank:</span>
<span class="t" style="left:1443.30px;top:180.00px;font-size:13px;font-weight:700;color:#555;letter-spacing:0.281px;">8,320th</span>
<span class="t" style="left:1494.30px;top:180.00px;font-size:13px;font-weight:700;color:#d81224;">(</span>
<span class="t" style="left:1521.10px;top:180.00px;font-size:13px;font-weight:700;color:#d81224;letter-spacing:0.145px;">1,454)</span>
<span class="t" style="left:1580.00px;top:179.00px;font-size:14.75px;font-weight:400;color:#555;letter-spacing:-0.444px;">View rank:</span>
<span class="t" style="left:1657.40px;top:180.00px;font-size:13px;font-weight:700;color:#555;letter-spacing:0.281px;">6,279th</span>
<span class="t" style="left:1709.00px;top:180.00px;font-size:13px;font-weight:700;color:#31a01c;">(</span>
<span class="t" style="left:1734.90px;top:180.00px;font-size:13px;font-weight:700;color:#31a01c;letter-spacing:0.352px;">91)</span>
<span class="t" style="left:1775.30px;top:178.00px;font-size:15px;font-weight:400;color:#555;letter-spacing:-0.457px;">View gain rank:</span>
<span class="t" style="left:1884.70px;top:180.00px;font-size:13px;font-weight:700;color:#555;letter-spacing:0.215px;">6,569th</span>
<span class="t" style="left:1936.00px;top:180.00px;font-size:13px;font-weight:700;color:#d81224;">(</span>
<span class="t" style="left:1962.00px;top:180.00px;font-size:13px;font-weight:700;color:#d81224;letter-spacing:0.265px;">2,443)</span>
<span class="t" style="left:379.60px;top:259.00px;font-size:22.5px;font-weight:700;color:#555;">380</span>
<span class="t" style="left:379.60px;top:284.00px;font-size:13px;font-weight:400;color:#8a8a8a;letter-spacing:-0.134px;">Average viewers</span>
<span class="t" style="left:531.30px;top:261.00px;font-size:15px;font-weight:700;color:#d81224;letter-spacing:0.213px;">20.7%</span>
<span class="t" style="left:556.60px;top:284.00px;font-size:13px;font-weight:400;color:#d81224;letter-spacing:-0.198px;">-99</span>
<span class="t" style="left:669.60px;top:259.00px;font-size:22.5px;font-weight:700;color:#555;">36,448</span>
<span class="t" style="left:669.60px;top:284.00px;font-size:13px;font-weight:400;color:#8a8a8a;letter-spacing:-0.010px;">Hours watched</span>
<span class="t" style="left:820.90px;top:261.00px;font-size:15px;font-weight:700;color:#d81224;letter-spacing:0.188px;">49.8%</span>
<span class="t" style="left:822.00px;top:284.00px;font-size:13px;font-weight:400;color:#d81224;letter-spacing:-0.266px;">-36,125</span>
<span class="t" style="left:953.60px;top:259.00px;font-size:22.5px;font-weight:700;color:#555;">782</span>
<span class="t" style="left:953.60px;top:284.00px;font-size:13px;font-weight:400;color:#8a8a8a;letter-spacing:-0.045px;">Followers gained</span>
<span class="t" style="left:1104.60px;top:261.00px;font-size:15px;font-weight:700;color:#d81224;letter-spacing:0.213px;">39.6%</span>
<span class="t" style="left:1122.70px;top:284.00px;font-size:13px;font-weight:400;color:#d81224;letter-spacing:-0.010px;">-512</span>
<span class="t" style="left:1237.60px;top:259.00px;font-size:22.5px;font-weight:700;color:#555;">63,849</span>
<span class="t" style="left:1237.60px;top:284.00px;font-size:13px;font-weight:400;color:#8a8a8a;letter-spacing:-0.090px;">Views gained</span>
<span class="t" style="left:1388.80px;top:261.00px;font-size:15px;font-weight:700;color:#d81224;letter-spacing:0.188px;">45.4%</span>
<span class="t" style="left:1390.30px;top:284.00px;font-size:13px;font-weight:400;color:#d81224;letter-spacing:-0.316px;">-53,005</span>
<span class="t" style="left:1521.60px;top:259.00px;font-size:22.5px;font-weight:700;color:#555;">627</span>
<span class="t" style="left:1521.60px;top:284.00px;font-size:13px;font-weight:400;color:#8a8a8a;letter-spacing:-0.392px;">Peak viewers</span>
<span class="t" style="left:1672.90px;top:261.00px;font-size:15px;font-weight:700;color:#d81224;letter-spacing:0.188px;">69.1%</span>
<span class="t" style="left:1681.20px;top:284.00px;font-size:13px;font-weight:400;color:#d81224;letter-spacing:-0.295px;">-1,399</span>
<span class="t" style="left:1801.60px;top:259.00px;font-size:22.5px;font-weight:700;color:#555;">95</span>
<span class="t" style="left:1801.60px;top:284.00px;font-size:13px;font-weight:400;color:#8a8a8a;letter-spacing:0.009px;">Hours streamed</span>
<span class="t" style="left:1953.80px;top:261.00px;font-size:15px;font-weight:700;color:#d81224;letter-spacing:0.113px;">36.7%</span>
<span class="t" style="left:1978.70px;top:284.00px;font-size:13px;font-weight:400;color:#d81224;letter-spacing:-0.198px;">-55</span>
<span class="t" style="left:4.00px;top:338.00px;font-size:13px;font-weight:700;color:#13a4a4;letter-spacing:0.102px;">DomiNation eSports</span>
<span class="t" style="left:15.70px;top:379.00px;font-size:15px;font-weight:700;color:#3a3a3a;letter-spacing:-0.249px;">aszabokristof&#x27;s viewers between Monday 1st November and Tuesday 30th November</span>
<span class="t" style="left:988.70px;top:380.00px;font-size:13px;font-weight:700;color:#13a4a4;letter-spacing:0.056px;">Show offline</span>
<span class="t" style="left:1078.30px;top:380.00px;font-size:13px;font-weight:700;color:#13a4a4;letter-spacing:0.105px;">Image</span>
<span class="t" style="left:1122.50px;top:380.00px;font-size:13px;font-weight:700;color:#13a4a4;letter-spacing:-0.494px;">Expand</span>
<span class="t" style="left:15.70px;top:411.00px;font-size:12px;font-weight:400;color:#555;letter-spacing:-0.318px;">Peak viewers 593 (Wednesday 3rd 20:00).</span>
<span class="t" style="left:1195.20px;top:384.00px;font-size:12.75px;font-weight:700;font-style:italic;color:#13a4a4;letter-spacing:-0.355px;">Streams</span>
<span class="t" style="left:1256.40px;top:384.00px;font-size:12.75px;font-weight:700;color:#13a4a4;letter-spacing:-0.333px;">Games</span>
<span class="t" style="left:1770.30px;top:382.00px;font-size:15px;font-weight:700;color:#3a3a3a;letter-spacing:-0.356px;">Stream summary</span>
<span class="t" style="left:1195.20px;top:428.00px;font-size:13.75px;font-weight:700;font-style:italic;color:#13a4a4;letter-spacing:-0.407px;">Start</span>
<span class="t" style="left:1325.30px;top:428.00px;font-size:13.75px;font-weight:700;color:#13a4a4;letter-spacing:-0.399px;">Stream length</span>
<span class="t" style="left:1455.80px;top:428.00px;font-size:13.5px;font-weight:700;color:#13a4a4;letter-spacing:-0.395px;">Avg Viewers</span>
<span class="t" style="left:1586.00px;top:428.00px;font-size:13.5px;font-weight:700;color:#13a4a4;letter-spacing:-0.425px;">Peak Viewers</span>
<span class="t" style="left:1716.00px;top:427.00px;font-size:14px;font-weight:700;color:#13a4a4;letter-spacing:-0.462px;">Watch time</span>
<span class="t" style="left:1846.50px;top:428.00px;font-size:13.25px;font-weight:700;color:#13a4a4;letter-spacing:-0.407px;">Followers</span>
<span class="t" style="left:1977.10px;top:428.00px;font-size:13px;font-weight:700;color:#13a4a4;letter-spacing:-0.431px;">Views</span>
<span class="t" style="left:2107.30px;top:429.00px;font-size:12.75px;font-weight:700;color:#13a4a4;letter-spacing:-0.408px;">Games</span>
<span class="t" style="left:1195.20px;top:472.00px;font-size:13.5px;font-weight:700;color:#13a4a4;letter-spacing:-0.270px;">Wed Dec 1st 15:37</span>
<span class="t" style="left:1325.30px;top:472.00px;font-size:13px;font-weight:400;color:#555;letter-spacing:-0.300px;">5.9 hrs</span>
<span class="t" style="left:1455.70px;top:472.00px;font-size:13px;font-weight:400;color:#555;letter-spacing:-0.300px;">442</span>
<span class="t" style="left:1585.90px;top:472.00px;font-size:13px;font-weight:400;color:#555;letter-spacing:-0.300px;">616</span>
<span class="t" style="left:1716.00px;top:472.00px;font-size:13px;font-weight:400;color:#555;letter-spacing:-0.300px;">2,593.1 hrs</span>
<span class="t" style="left:1846.40px;top:472.00px;font-size:13px;font-weight:400;color:#555;letter-spacing:-0.300px;">30</span>
<span class="t" style="left:1977.00px;top:472.00px;font-size:13px;font-weight:400;color:#555;letter-spacing:-0.300px;">3,370</span>
<span class="t" style="left:1195.20px;top:516.00px;font-size:13.5px;font-weight:700;color:#13a4a4;letter-spacing:0.026px;">Mon Nov 29th</span>
<span class="t" style="left:1325.30px;top:516.00px;font-size:13px;font-weight:400;color:#555;letter-spacing:-0.300px;">3 hrs</span>
<span class="t" style="left:1455.70px;top:516.00px;font-size:13px;font-weight:400;color:#555;letter-spacing:-0.300px;">416</span>
<span class="t" style="left:1585.90px;top:516.00px;font-size:13px;font-weight:400;color:#555;letter-spacing:-0.300px;">521</span>
<span class="t" style="left:1716.00px;top:516.00px;font-size:13px;font-weight:400;color:#555;letter-spacing:-0.300px;">1,241.1 hrs</span>
<span class="t" style="left:1846.40px;top:516.00px;font-size:13px;font-weight:400;color:#555;letter-spacing:-0.300px;">11</span>
<span class="t" style="left:1977.00px;top:516.00px;font-size:13px;font-weight:400;color:#555;letter-spacing:-0.300px;">1,794</span>
<span class="t" style="left:1195.20px;top:560.00px;font-size:13.5px;font-weight:700;color:#13a4a4;letter-spacing:-0.173px;">Sun Nov 28th 16:18</span>
<span class="t" style="left:1325.30px;top:560.00px;font-size:13px;font-weight:400;color:#555;letter-spacing:-0.300px;">5.9 hrs</span>
<span class="t" style="left:1455.70px;top:560.00px;font-size:13px;font-weight:400;color:#555;letter-spacing:-0.300px;">431</span>
<span class="t" style="left:1585.90px;top:560.00px;font-size:13px;font-weight:400;color:#555;letter-spacing:-0.300px;">589</span>
<span class="t" style="left:1716.00px;top:560.00px;font-size:13px;font-weight:400;color:#555;letter-spacing:-0.300px;">2,557.3 hrs</span>
<span class="t" style="left:1846.40px;top:560.00px;font-size:13px;font-weight:400;color:#555;letter-spacing:-0.300px;">32</span>
<span class="t" style="left:1977.00px;top:560.00px;font-size:13px;font-weight:400;color:#555;letter-spacing:-0.300px;">3,628</span>
<span class="t" style="left:1195.20px;top:604.00px;font-size:13.5px;font-weight:700;color:#13a4a4;letter-spacing:-0.135px;">Fri Nov 26th 17:00</span>
<span class="t" style="left:1325.30px;top:604.00px;font-size:13px;font-weight:400;color:#555;letter-spacing:-0.300px;">3 hrs</span>
<span class="t" style="left:1455.70px;top:604.00px;font-size:13px;font-weight:400;color:#555;letter-spacing:-0.300px;">337</span>
<span class="t" style="left:1585.90px;top:604.00px;font-size:13px;font-weight:400;color:#555;letter-spacing:-0.300px;">459</span>
<span class="t" style="left:1716.00px;top:604.00px;font-size:13px;font-weight:400;color:#555;letter-spacing:-0.300px;">1,005.4 hrs</span>
<span class="t" style="left:1846.40px;top:604.00px;font-size:13px;font-weight:400;color:#555;letter-spacing:-0.300px;">16</span>
<span class="t" style="left:1977.00px;top:604.00px;font-size:13px;font-weight:400;color:#555;letter-spacing:-0.300px;">1,472</span>
<span class="t" style="left:1195.20px;top:648.00px;font-size:13.5px;font-weight:700;color:#13a4a4;letter-spacing:-0.134px;">Thu Nov 25th 20:47</span>
<span class="t" style="left:1325.30px;top:648.00px;font-size:13px;font-weight:400;color:#555;letter-spacing:-0.300px;">2.2 hrs</span>
<span class="t" style="left:1455.70px;top:648.00px;font-size:13px;font-weight:400;color:#555;letter-spacing:-0.300px;">393</span>
<span class="t" style="left:1585.90px;top:648.00px;font-size:13px;font-weight:400;color:#555;letter-spacing:-0.300px;">460</span>
<span class="t" style="left:1716.00px;top:648.00px;font-size:13px;font-weight:400;color:#555;letter-spacing:-0.300px;">864.6 hrs</span>
<span class="t" style="left:1846.40px;top:648.00px;font-size:13px;font-weight:400;color:#555;letter-spacing:-0.300px;">24</span>
<span class="t" style="left:1977.00px;top:648.00px;font-size:13px;font-weight:400;color:#555;letter-spacing:-0.300px;">1,031</span>
<span class="t" style="left:1195.20px;top:692.00px;font-size:13.5px;font-weight:700;color:#13a4a4;letter-spacing:-0.134px;">Thu Nov 25th 15:04</span>
<span class="t" style="left:1325.30px;top:692.00px;font-size:13px;font-weight:400;color:#555;letter-spacing:-0.300px;">5.2 hrs</span>
<span class="t" style="left:1455.70px;top:692.00px;font-size:13px;font-weight:400;color:#555;letter-spacing:-0.300px;">353</span>
<span class="t" style="left:1585.90px;top:692.00px;font-size:13px;font-weight:400;color:#555;letter-spacing:-0.300px;">492</span>
<span class="t" style="left:1716.00px;top:692.00px;font-size:13px;font-weight:400;color:#555;letter-spacing:-0.300px;">1,823.8 hrs</span>
<span class="t" style="left:1846.40px;top:692.00px;font-size:13px;font-weight:400;color:#555;letter-spacing:-0.300px;">28</span>
<span class="t" style="left:1977.00px;top:692.00px;font-size:13px;font-weight:400;color:#555;letter-spacing:-0.300px;">3,044</span>
<span class="t" style="left:1195.20px;top:736.00px;font-size:13.5px;font-weight:700;color:#13a4a4;letter-spacing:-0.020px;">Wed Nov 24th</span>
<span class="t" style="left:1325.30px;top:736.00px;font-size:13px;font-weight:400;color:#555;letter-spacing:-0.300px;">2.8 hrs</span>
<span class="t" style="left:1455.70px;top:736.00px;font-size:13px;font-weight:400;color:#555;letter-spacing:-0.300px;">376</span>
<span class="t" style="left:1585.90px;top:736.00px;font-size:13px;font-weight:400;color:#555;letter-spacing:-0.300px;">418</span>
<span class="t" style="left:1716.00px;top:736.00px;font-size:13px;font-weight:400;color:#555;letter-spacing:-0.300px;">1,034 hrs</span>
<span class="t" style="left:1846.40px;top:736.00px;font-size:13px;font-weight:400;color:#555;letter-spacing:-0.300px;">19</span>
<span class="t" style="left:1977.00px;top:736.00px;font-size:13px;font-weight:400;color:#555;letter-spacing:-0.300px;">1,457</span>
<span class="t" style="left:1195.20px;top:780.00px;font-size:13.5px;font-weight:700;color:#13a4a4;letter-spacing:-0.171px;">Tue Nov 23rd 13:41</span>
<span class="t" style="left:1325.30px;top:780.00px;font-size:13px;font-weight:400;color:#555;letter-spacing:-0.300px;">1.8 hrs</span>
<span class="t" style="left:1455.70px;top:780.00px;font-size:13px;font-weight:400;color:#555;letter-spacing:-0.300px;">218</span>
<span class="t" style="left:1585.90px;top:780.00px;font-size:13px;font-weight:400;color:#555;letter-spacing:-0.300px;">316</span>
<span class="t" style="left:1716.00px;top:780.00px;font-size:13px;font-weight:400;color:#555;letter-spacing:-0.300px;">392.4 hrs</span>
<span class="t" style="left:1846.40px;top:780.00px;font-size:13px;font-weight:400;color:#555;letter-spacing:-0.300px;">10</span>
<span class="t" style="left:1977.00px;top:780.00px;font-size:13px;font-weight:400;color:#555;letter-spacing:-0.300px;">786</span>
<span class="t" style="left:1195.20px;top:824.00px;font-size:13.5px;font-weight:700;color:#13a4a4;letter-spacing:-0.006px;">Mon Nov 22nd</span>
<span class="t" style="left:1325.30px;top:824.00px;font-size:13px;font-weight:400;color:#555;letter-spacing:-0.300px;">7.1 hrs</span>
<span class="t" style="left:1455.70px;top:824.00px;font-size:13px;font-weight:400;color:#555;letter-spacing:-0.300px;">354</span>
<span class="t" style="left:1585.90px;top:824.00px;font-size:13px;font-weight:400;color:#555;letter-spacing:-0.300px;">585</span>
<span class="t" style="left:1716.00px;top:824.00px;font-size:13px;font-weight:400;color:#555;letter-spacing:-0.300px;">2,519.3 hrs</span>
<span class="t" style="left:1846.40px;top:824.00px;font-size:13px;font-weight:400;color:#555;letter-spacing:-0.300px;">42</span>
<span class="t" style="left:1977.00px;top:824.00px;font-size:13px;font-weight:400;color:#555;letter-spacing:-0.300px;">3,954</span>
<span class="t" style="left:1195.20px;top:868.00px;font-size:13.5px;font-weight:700;color:#13a4a4;letter-spacing:-0.129px;">Fri Nov 19th 21:19</span>
<span class="t" style="left:1325.30px;top:868.00px;font-size:13px;font-weight:400;color:#555;letter-spacing:-0.300px;">3.4 hrs</span>
<span class="t" style="left:1455.70px;top:868.00px;font-size:13px;font-weight:400;color:#555;letter-spacing:-0.300px;">370</span>
<span class="t" style="left:1585.90px;top:868.00px;font-size:13px;font-weight:400;color:#555;letter-spacing:-0.300px;">486</span>
<span class="t" style="left:1716.00px;top:868.00px;font-size:13px;font-weight:400;color:#555;letter-spacing:-0.300px;">1,264.2 hrs</span>
<span class="t" style="left:1846.40px;top:868.00px;font-size:13px;font-weight:400;color:#555;letter-spacing:-0.300px;">29</span>
<span class="t" style="left:1977.00px;top:868.00px;font-size:13px;font-weight:400;color:#555;letter-spacing:-0.300px;">2,262</span>
<span class="t" style="left:1676.60px;top:905.00px;font-size:13px;font-weight:700;color:#13a4a4;letter-spacing:-0.037px;">More stream stats (23 streams)</span>
<span class="t" style="left:16.24px;top:458.00px;font-size:11px;font-weight:400;color:#666;">600</span>
<span class="t" style="left:16.24px;top:543.00px;font-size:11px;font-weight:400;color:#666;">500</span>
<span class="t" style="left:16.24px;top:628.00px;font-size:11px;font-weight:400;color:#666;">400</span>
<span class="t" style="left:16.24px;top:713.00px;font-size:11px;font-weight:400;color:#666;">300</span>
<span class="t" style="left:16.24px;top:798.00px;font-size:11px;font-weight:400;color:#666;">200</span>
<span class="t" style="left:16.24px;top:883.00px;font-size:11px;font-weight:400;color:#666;">100</span>
<span class="t" style="left:28.48px;top:968.00px;font-size:11px;font-weight:400;color:#666;">0</span>
<span class="t" style="left:233.44px;top:985.00px;font-size:11px;font-weight:400;color:#666;">Sun 7th</span>
<span class="t" style="left:394.85px;top:985.00px;font-size:11px;font-weight:400;color:#666;">Fri 12th</span>
<span class="t" style="left:553.55px;top:985.00px;font-size:11px;font-weight:400;color:#666;">Wed 17th</span>
<span class="t" style="left:681.53px;top:985.00px;font-size:11px;font-weight:400;color:#666;">Mon 22nd</span>
<span class="t" style="left:949.21px;top:985.00px;font-size:11px;font-weight:400;color:#666;">Sat 27th</span>
<span class="t" style="left:365.20px;top:441.00px;font-size:11px;font-weight:400;color:#777;letter-spacing:-0.138px;">Poker</span>
<span class="t" style="left:429.70px;top:441.00px;font-size:11px;font-weight:400;color:#777;letter-spacing:-0.047px;">slot!</span>
<span class="t" style="left:486.40px;top:441.00px;font-size:11px;font-weight:400;color:#777;letter-spacing:0.008px;">Slots</span>
<span class="t" style="left:547.40px;top:441.00px;font-size:11px;font-weight:400;color:#777;letter-spacing:-0.121px;">Crypto</span>
<span class="t" style="left:616.00px;top:441.00px;font-size:11px;font-weight:400;color:#777;letter-spacing:-0.034px;">Just Chatting</span>
<span class="t" style="left:716.80px;top:441.00px;font-size:11px;font-weight:400;color:#777;letter-spacing:-0.024px;">Call of Duty: Warzone</span>
<span class="t" style="left:46.30px;top:1017.00px;font-size:11px;font-weight:700;color:#13a4a4;letter-spacing:-0.028px;">Mon 1 Nov 21</span>
<span class="t" style="left:1068.60px;top:1017.00px;font-size:11px;font-weight:700;color:#13a4a4;letter-spacing:-0.248px;">Tue 30 Nov 21</span>
</body></html>
